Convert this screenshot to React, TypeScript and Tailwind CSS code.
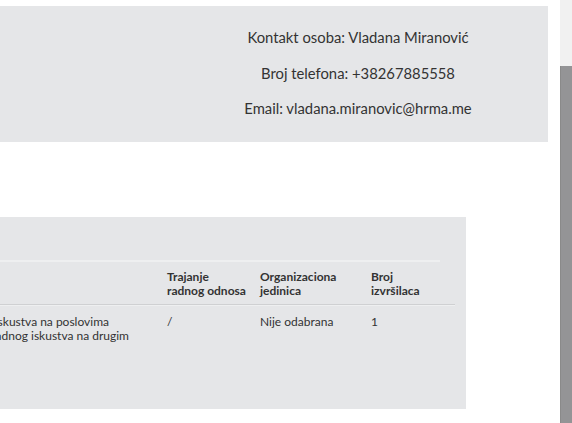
import React from 'react';

const contact = [
  'Kontakt osoba: Vladana Miranović',
  'Broj telefona: +38267885558',
  'Email: vladana.miranovic@hrma.me',
];

export default function App() {
  return (
    <div className="flex h-[423px] w-[572px] overflow-hidden bg-white text-[#333] font-['Lato','Liberation_Sans',sans-serif]">
      <div className="flex-1 overflow-hidden">
        {/* contact panel */}
        <div className="mt-[6px] flex h-[136px] w-[548px] flex-col items-center justify-center gap-[14.5px] bg-[#e5e6e8] pb-[2px] pl-[168px] text-[14.8px] leading-[21px]">
          {contact.map(line => (
            <p key={line}>{line}</p>
          ))}
        </div>

        {/* positions table */}
        <div className="mt-[75px] h-[192px] w-[466px] bg-[#e5e6e8] pt-[43px]">
          <div className="h-[2px] w-[440px] bg-[#eeeff0]" />
          <div className="flex w-[455px] border-b border-[#cfd0d2] pt-[8px] pb-[6px] text-[12px] font-bold leading-[14px]">
            <div className="w-[167px]" />
            <div className="w-[93px]">Trajanje<br />radnog odnosa</div>
            <div className="w-[111px]">Organizaciona<br />jedinica</div>
            <div>Broj<br />izvršilaca</div>
          </div>
          <div className="h-px w-[455px] bg-[#eeeff0]" />
          <div className="flex pt-[9px] text-[12px] leading-[14px]">
            <div className="w-[167px]">
              <div className="flex w-[109px] justify-end overflow-hidden whitespace-nowrap">
                Bez radnog iskustva na poslovima
              </div>
              <div className="flex w-[129px] justify-end overflow-hidden whitespace-nowrap">
                i do godinu dana radnog iskustva na drugim
              </div>
            </div>
            <div className="w-[93px]">/</div>
            <div className="w-[111px]">Nije odabrana</div>
            <div>1</div>
          </div>
        </div>
      </div>

      {/* scrollbar */}
      <div className="flex w-[12px] flex-col">
        <div className="h-[66px] bg-[#f1f1f1]" />
        <div className="flex-1 border-l border-[#8a8a8a] bg-[#949496]" />
      </div>
    </div>
  );
}
